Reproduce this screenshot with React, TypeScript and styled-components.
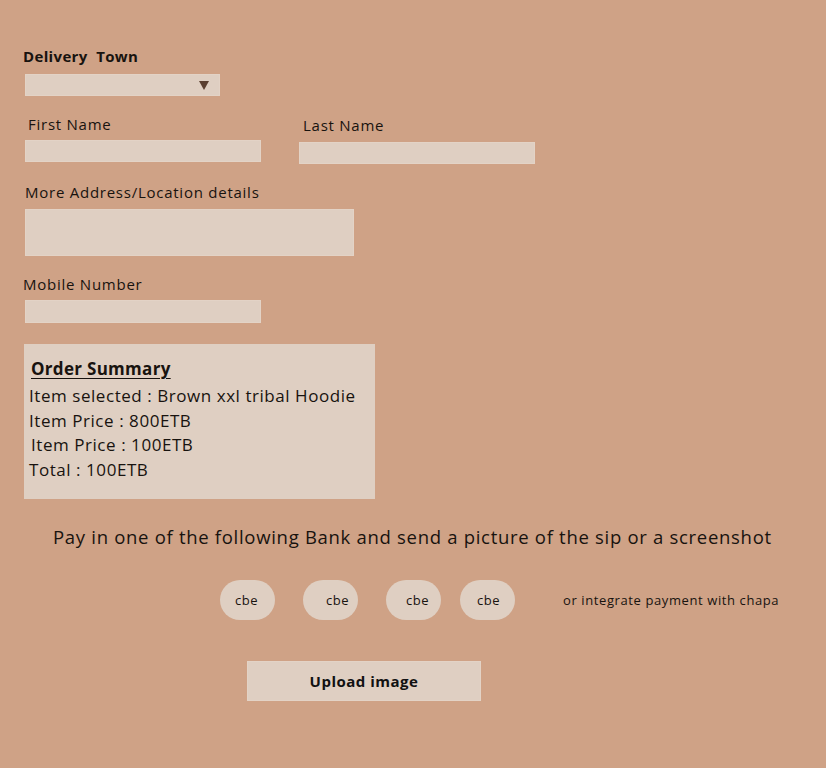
import React from "react";
import styled, { createGlobalStyle } from "styled-components";

const Global = createGlobalStyle`
  html, body { margin: 0; padding: 0; background: #cfa286; }
  * { box-sizing: border-box; }
`;

const FONT = `"Open Sans", "DejaVu Sans", sans-serif`;

const Page = styled.div`
  width: 826px;
  height: 768px;
  background: #cfa286;
  font-family: ${FONT};
  color: #18130f;
  padding-top: 46px;
  display: flex;
  flex-direction: column;
`;

const Label = styled.div<{ $x: number; $top?: number; $bold?: boolean; $size?: number }>`
  margin-left: ${(p) => p.$x}px;
  margin-top: ${(p) => p.$top ?? 0}px;
  font-size: ${(p) => p.$size ?? 15}px;
  font-weight: ${(p) => (p.$bold ? 700 : 400)};
  letter-spacing: ${(p) => (p.$bold ? 0.35 : 0.75)}px;
  line-height: 20px;
  height: 20px;
  white-space: pre;
`;

const Box = styled.div<{ $x: number; $top: number; $w: number; $h: number }>`
  margin-left: ${(p) => p.$x}px;
  margin-top: ${(p) => p.$top}px;
  width: ${(p) => p.$w}px;
  height: ${(p) => p.$h}px;
  background: #dfcfc2;
  border: 1px solid #e3d3c6;
  flex: none;
`;

const Select = styled(Box)`
  display: flex;
  align-items: center;
  justify-content: flex-end;
  padding-right: 10px;
`;

const Caret = styled.span`
  width: 0;
  height: 0;
  border-left: 5px solid transparent;
  border-right: 5px solid transparent;
  border-top: 9px solid #5b3f30;
`;

const NameRow = styled.div`
  display: flex;
  margin-top: 18px;
`;

const NameCol = styled.div<{ $w: number }>`
  display: flex;
  flex-direction: column;
  width: ${(p) => p.$w}px;
`;

const Summary = styled.div`
  margin-left: 24px;
  margin-top: 21px;
  width: 351px;
  height: 155px;
  background: #dfcfc2;
  padding: 14px 0 0 0;
  flex: none;
`;

const SummaryTitle = styled.div`
  margin-left: 7px;
  font-size: 17px;
  font-weight: 700;
  letter-spacing: 0.3px;
  text-decoration: underline;
  text-underline-offset: 3px;
  line-height: 22px;
  height: 26px;
`;

const SummaryLine = styled.div<{ $x: number }>`
  margin-left: ${(p) => p.$x}px;
  font-size: 17px;
  letter-spacing: 0.55px;
  line-height: 24.7px;
  white-space: pre;
`;

const PayText = styled.div`
  margin-top: 26px;
  margin-left: 53px;
  font-size: 18.5px;
  letter-spacing: 0.7px;
  line-height: 24px;
  white-space: nowrap;
`;

const BankRow = styled.div`
  display: flex;
  align-items: center;
  margin-top: 31px;
  margin-left: 220px;
`;

const Pill = styled.div<{ $gap: number; $shift: number }>`
  width: 55px;
  height: 40px;
  margin-right: ${(p) => p.$gap}px;
  border-radius: 20px;
  background: #dfcfc2;
  font-size: 13px;
  letter-spacing: 0.5px;
  display: flex;
  align-items: center;
  justify-content: center;
  padding-left: ${(p) => (p.$shift > 0 ? p.$shift * 2 : 0)}px;
  padding-right: ${(p) => (p.$shift < 0 ? -p.$shift * 2 : 0)}px;
  flex: none;
`;

const Chapa = styled.div`
  margin-left: 48px;
  font-size: 13px;
  letter-spacing: 0.6px;
  white-space: nowrap;
  padding-bottom: 1px;
`;

const Upload = styled.button`
  margin-top: 41px;
  margin-left: 247px;
  width: 234px;
  height: 40px;
  background: #dfcfc2;
  border: 1px solid #e3d3c6;
  font-family: ${FONT};
  font-size: 15px;
  font-weight: 700;
  letter-spacing: 0.5px;
  color: #111;
  padding: 0;
`;

export default function App() {
  const pills = [
    { gap: 28, shift: -1 },
    { gap: 28, shift: 7 },
    { gap: 19, shift: 4 },
    { gap: 0, shift: 1 },
  ];
  return (
    <>
      <Global />
      <Page>
        <Label $x={23} $bold>{"Delivery  Town"}</Label>
        <Select $x={25} $top={8} $w={195} $h={22}>
          <Caret />
        </Select>
        <NameRow>
          <NameCol $w={274}>
            <Label $x={28}>First Name</Label>
            <Box $x={25} $top={6} $w={236} $h={22} />
          </NameCol>
          <NameCol $w={300}>
            <Label $x={29} $top={1}>Last Name</Label>
            <Box $x={25} $top={7} $w={236} $h={22} />
          </NameCol>
        </NameRow>
        <Label $x={25} $top={18}>More Address/Location details</Label>
        <Box $x={25} $top={7} $w={329} $h={47} />
        <Label $x={23} $top={18}>Mobile Number</Label>
        <Box $x={25} $top={6} $w={236} $h={23} />
        <Summary>
          <SummaryTitle>Order Summary</SummaryTitle>
          <SummaryLine $x={5}>Item selected : Brown xxl tribal Hoodie</SummaryLine>
          <SummaryLine $x={5}>Item Price : 800ETB</SummaryLine>
          <SummaryLine $x={7}>Item Price : 100ETB</SummaryLine>
          <SummaryLine $x={5}>Total : 100ETB</SummaryLine>
        </Summary>
        <PayText>Pay in one of the following Bank and send a picture of the sip or a screenshot</PayText>
        <BankRow>
          {pills.map((p, i) => (
            <Pill key={i} $gap={p.gap} $shift={p.shift}>cbe</Pill>
          ))}
          <Chapa>or integrate payment with chapa</Chapa>
        </BankRow>
        <Upload>Upload image</Upload>
      </Page>
    </>
  );
}
